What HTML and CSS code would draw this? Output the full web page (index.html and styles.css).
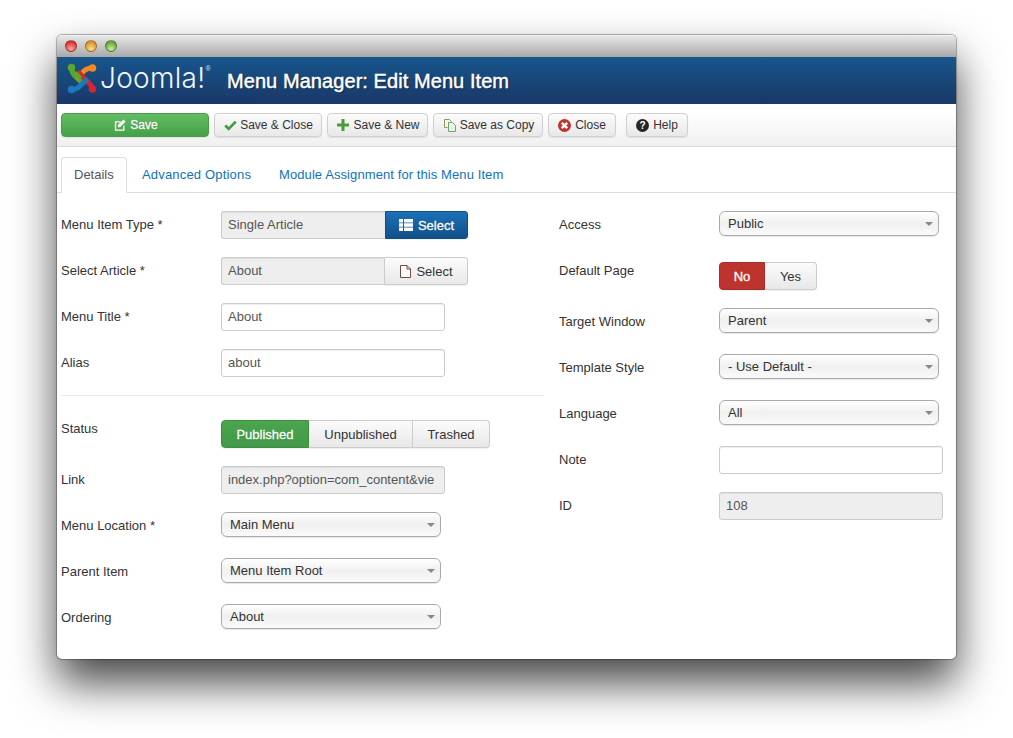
FILE: index.html
```html
<!DOCTYPE html>
<html lang="en">
<head>
<meta charset="utf-8">
<title>Menu Manager: Edit Menu Item</title>
<link rel="stylesheet" href="styles.css">
</head>
<body>
<div class="window">
  <div class="titlebar">
    <span class="light red"></span><span class="light amber"></span><span class="light green"></span>
  </div>
  <header class="header">
    <div class="logo">
      <svg class="logo-mark" width="30" height="31" viewBox="0 0 30 31" fill="none" stroke-linecap="round" stroke-linejoin="round" stroke-width="5">
        <path d="M4.500 4.500C4.500 9 6 11 8 13L13 18" stroke="#5aa52c"/>
        <circle cx="4.500" cy="4.500" r="3.800" fill="#5aa52c"/>
        <path d="M25.500 5C21 5 19 6 17 8L11 14" stroke="#f08a24"/>
        <circle cx="25.500" cy="5" r="3.800" fill="#f08a24"/>
        <path d="M12 10L21 19C23.500 21.500 25.500 23 25.500 26" stroke="#d8252d"/>
        <circle cx="25.500" cy="26" r="3.800" fill="#d8252d"/>
        <path d="M4.500 26.500C8 26.500 10 26 12.500 23.500L19 17" stroke="#1c78bb"/>
        <circle cx="4.500" cy="26.500" r="3.800" fill="#1c78bb"/>
        <path d="M9 11L12 14" stroke="#5aa52c"/>
      </svg>
      <span class="logo-text">Joomla!</span><span class="logo-reg">®</span>
    </div>
    <h1 class="page-title">Menu Manager: Edit Menu Item</h1>
  </header>
  <div class="toolbar">
    <button class="btn btn-save">
      <svg class="ico" width="12" height="13" viewBox="0 0 14 14"><path fill="#fff" d="M1 2h7L6.500 3.600H2.600v8h8V8L12.200 6.400v6.600H1z"/><path fill="#fff" d="M11 0l2.500 2.500L7 9H4.500V6.500z"/></svg>
      Save
    </button>
    <button class="btn btn-w1">
      <svg class="ico" width="13" height="11" viewBox="0 0 14 12"><path fill="none" stroke="#3f9c45" stroke-width="3" d="M1.300 6l3.700 3.700L12.700 1.800"/></svg>
      Save &amp; Close
    </button>
    <button class="btn btn-w2">
      <svg class="ico" width="12" height="12" viewBox="0 0 12 12"><path fill="#4b9b3c" d="M4.500 0h3v4.500H12v3H7.500V12h-3V7.500H0v-3h4.500z"/></svg>
      Save &amp; New
    </button>
    <button class="btn btn-w3">
      <svg class="ico" width="12" height="13" viewBox="0 0 12 13" fill="none" stroke-width="1"><path stroke="#8a9a55" d="M.5.500h5l2 2M.5.500v8h3"/><path stroke="#6aa86a" d="M4.500 3.500h4l3 3v6h-7z"/></svg>
      Save as Copy
    </button>
    <button class="btn btn-w4">
      <svg class="ico" width="13" height="13" viewBox="0 0 13 13"><circle cx="6.500" cy="6.500" r="6.500" fill="#c0332e"/><path stroke="#fff" stroke-width="2.400" d="M3.800 3.800l5.400 5.400M9.200 3.800l-5.400 5.400"/></svg>
      Close
    </button>
    <button class="btn btn-w5">
      <svg class="ico" width="13" height="13" viewBox="0 0 13 13"><circle cx="6.500" cy="6.500" r="6.500" fill="#262626"/><text class="ico-q" x="6.500" y="10.300" text-anchor="middle">?</text></svg>
      Help
    </button>
  </div>
  <nav class="tabs">
    <a class="tab tab-active">Details</a>
    <a class="tab tab-w2">Advanced Options</a>
    <a class="tab">Module Assignment for this Menu Item</a>
  </nav>
  <main class="content">
    <section class="col-left">
      <div class="row"><div class="label">Menu Item Type *</div>
        <div class="append">
          <div class="input readonly joined">Single Article</div>
          <button class="append-btn append-primary">
            <svg class="ico" width="14" height="12" viewBox="0 0 14 12"><path fill="#fff" d="M0 0h4v3.400H0zM5 0h9v3.400H5zM0 4.300h4v3.400H0zM5 4.300h9v3.400H5zM0 8.600h4V12H0zM5 8.600h9V12H5z"/></svg>
            Select
          </button>
        </div>
      </div>
      <div class="row"><div class="label">Select Article *</div>
        <div class="append">
          <div class="input readonly joined joined-narrow">About</div>
          <button class="append-btn append-wide">
            <svg class="ico" width="11" height="13" viewBox="0 0 11 13"><path fill="#fff" stroke="#7a4a3a" d="M.5.500h6.500l3.500 3.500v8.500H.5z"/><path fill="none" stroke="#7a4a3a" d="M7 .500V4h3.500"/></svg>
            Select
          </button>
        </div>
      </div>
      <div class="row"><div class="label">Menu Title *</div><div class="input">About</div></div>
      <div class="row"><div class="label">Alias</div><div class="input">about</div></div>
      <hr class="divider">
      <div class="row"><div class="label label-top">Status</div>
        <div class="group">
          <button class="seg seg-published">Published</button><button class="seg seg-w2">Unpublished</button><button class="seg seg-w3">Trashed</button>
        </div>
      </div>
      <div class="row"><div class="label">Link</div><div class="input readonly">index.php?option=com_content&amp;vie</div></div>
      <div class="row"><div class="label">Menu Location *</div><div class="select">Main Menu</div></div>
      <div class="row"><div class="label">Parent Item</div><div class="select">Menu Item Root</div></div>
      <div class="row"><div class="label">Ordering</div><div class="select">About</div></div>
    </section>
    <section class="col-right">
      <div class="row row-tall"><div class="label">Access</div><div class="select">Public</div></div>
      <div class="row"><div class="label label-top">Default Page</div>
        <div class="group">
          <button class="seg seg-no">No</button><button class="seg seg-yes">Yes</button>
        </div>
      </div>
      <div class="row"><div class="label">Target Window</div><div class="select">Parent</div></div>
      <div class="row"><div class="label">Template Style</div><div class="select">- Use Default -</div></div>
      <div class="row"><div class="label">Language</div><div class="select">All</div></div>
      <div class="row"><div class="label">Note</div><div class="input"></div></div>
      <div class="row"><div class="label">ID</div><div class="input readonly">108</div></div>
    </section>
  </main>
</div>
</body>
</html>
```
FILE: styles.css
```css
* { box-sizing: border-box; }
html, body { height: 100%; }
body {
  margin: 0;
  padding: 35px 57px 0;
  background: #fff;
  overflow: hidden;
  font-family: "Liberation Sans", Arial, sans-serif;
  font-size: 13px;
  color: #333;
}
button { font: inherit; cursor: default; }
.window {
  width: 899px;
  height: 624px;
  background: #fff;
  border-radius: 5px;
  overflow: hidden;
  box-shadow: 0 24px 44px rgba(0,0,0,.72), 0 0 1px 1px rgba(0,0,0,.3);
}
.titlebar {
  height: 22px;
  display: flex;
  align-items: center;
  gap: 8px;
  padding: 0 0 2px 8px;
  background: linear-gradient(#e6e6e6, #a9a9a9);
  border-top: 1px solid #f0f0f0;
}
.light {
  width: 12px;
  height: 12px;
  border-radius: 50%;
  border: 1px solid rgba(0,0,0,.3);
}
.light.red { background: radial-gradient(circle at 50% 80%, #f9a9a0, #dc3a36 70%); }
.light.amber { background: radial-gradient(circle at 50% 80%, #fbdc92, #dd962d 70%); }
.light.green { background: radial-gradient(circle at 50% 80%, #c8eca0, #69a83f 70%); }
.header {
  height: 47px;
  display: flex;
  align-items: center;
  padding-left: 10px;
  background: linear-gradient(#17568c, #1a3767);
  color: #fff;
}
.logo {
  width: 160px;
  display: flex;
  align-items: flex-start;
  height: 47px;
  padding-top: 6px;
}
.logo-mark { flex: none; }
.logo-text {
  margin-left: 3px;
  font-family: Inter, "Open Sans", sans-serif;
  font-weight: 300;
  font-size: 28px;
  line-height: 30px;
  letter-spacing: .3px;
  color: #f2f6fa;
}
.logo-reg {
  font-size: 7px;
  line-height: 10px;
  margin-top: 1px;
  color: #dfe7ef;
}
.page-title {
  margin: 0;
  font-size: 20px;
  font-weight: 400;
  line-height: 24px;
  letter-spacing: .07px;
  color: #fff;
  -webkit-text-stroke: .45px #fff;
  text-shadow: 1px 1px 1px #0b2444;
}
.toolbar {
  height: 43px;
  display: flex;
  align-items: center;
  gap: 5px;
  padding: 0 0 0 4px;
  background: linear-gradient(#fff 20%, #f0f0f0);
  border-bottom: 1px solid #d9d9d9;
}
.btn {
  height: 24px;
  padding: 0;
  display: flex;
  align-items: center;
  justify-content: center;
  gap: 4px;
  font-size: 12px;
  color: #333;
  border: 1px solid #d0d0d0;
  border-radius: 4px;
  background: linear-gradient(#fbfbfb, #e8e8e8);
  box-shadow: 0 1px 1px rgba(0,0,0,.08);
}
.ico { flex: none; }
.ico-q { font: 700 10px "Liberation Sans", sans-serif; fill: #fff; }
.btn-save {
  width: 148px;
  padding-left: 2px;
  color: #fff;
  -webkit-text-stroke: .3px #fff;
  text-shadow: 0 0 1px rgba(0,0,0,.4);
  border-color: #4f9a51;
  background: linear-gradient(#62bd63, #45a047);
}
.btn-w1 { width: 108px; padding-left: 1px; gap: 3px; }
.btn-w2 { width: 101px; padding-left: 2px; }
.btn-w3 { width: 110px; padding-left: 2px; }
.btn-w4 { width: 68px; }
.btn-w5 { width: 62px; margin-left: 5px; }
.tabs {
  height: 46px;
  padding: 10px 0 0 4px;
  display: flex;
  border-bottom: 1px solid #ddd;
}
.tab {
  height: 36px;
  padding: 0 14px;
  line-height: 34px;
  letter-spacing: .09px;
  white-space: nowrap;
  color: #0f73bd;
  border-top: 1px solid transparent;
}
.tab-w2 { width: 137px; letter-spacing: .18px; }
.tab-active {
  width: 66px;
  margin-right: 1px;
  padding: 0 12px;
  letter-spacing: 0;
  color: #555;
  background: #fff;
  border: 1px solid #ddd;
  border-bottom-color: #fff;
  border-radius: 4px 4px 0 0;
}
.content {
  display: flex;
  gap: 15px;
  padding: 18px 0 0 4px;
}
.col-left { width: 483px; }
.col-right { flex: 1; }
.row { display: flex; height: 46px; }
.row-tall { height: 51px; }
.label {
  width: 160px;
  flex: none;
  padding-top: 5px;
  line-height: 18px;
}
.label-top { padding-top: 0; }
.input {
  width: 224px;
  height: 28px;
  padding: 0 6px;
  line-height: 25px;
  color: #555;
  background: #fff;
  border: 1px solid #ccc;
  border-radius: 3px;
  box-shadow: inset 0 1px 1px rgba(0,0,0,.07);
  white-space: nowrap;
  overflow: hidden;
}
.readonly { background: #eee; }
.append { display: flex; height: 28px; }
.joined {
  width: 164px;
  border-radius: 3px 0 0 3px;
  border-right-width: 0;
}
.joined-narrow { width: 163px; }
.append-btn {
  width: 83px;
  height: 28px;
  padding: 0;
  display: flex;
  align-items: center;
  justify-content: center;
  gap: 5px;
  color: #333;
  border: 1px solid #ccc;
  border-radius: 0 3px 3px 0;
  background: linear-gradient(#fcfcfc, #e8e8e8);
  box-shadow: 0 1px 1px rgba(0,0,0,.06);
}
.append-wide { width: 84px; padding-left: 1px; }
.append-primary {
  color: #fff;
  -webkit-text-stroke: .3px #fff;
  border-color: #14507f;
  background: linear-gradient(#1a71b8, #13508a);
  text-shadow: 0 0 1px rgba(0,0,0,.4);
}
.divider {
  height: 1px;
  margin: 0 0 24px;
  border: 0;
  background: #eaeaea;
}
.group { display: flex; height: 28px; }
.seg {
  height: 28px;
  padding: 0;
  color: #333;
  border: 1px solid #ccc;
  border-left-width: 0;
  background: linear-gradient(#fbfbfb, #e8e8e8);
  box-shadow: 0 1px 1px rgba(0,0,0,.06);
}
.seg:first-child { border-left-width: 1px; border-radius: 4px 0 0 4px; }
.seg:last-child { border-radius: 0 4px 4px 0; }
.seg-published {
  width: 88px;
  color: #fff;
  -webkit-text-stroke: .3px #fff;
  border-color: #3f8f42;
  background: linear-gradient(#4aa54c, #43994a);
  text-shadow: 0 0 1px rgba(0,0,0,.3);
}
.seg-w2 { width: 104px; }
.seg-w3 { width: 77px; }
.seg-no {
  width: 46px;
  color: #fff;
  -webkit-text-stroke: .3px #fff;
  border-color: #a82c28;
  background: #bd342e;
}
.seg-yes { width: 52px; }
.select {
  width: 220px;
  height: 25px;
  padding: 0 8px;
  line-height: 23px;
  color: #333;
  border: 1px solid #aaa;
  border-radius: 6px;
  background: linear-gradient(#fff, #f0f0f0 50%, #fafafa);
  box-shadow: 0 1px 1px rgba(0,0,0,.1);
  position: relative;
}
.select::after {
  content: "";
  position: absolute;
  right: 5px;
  top: 10px;
  border: 4px solid transparent;
  border-top: 4px solid #888;
  border-bottom: 0;
}
```
